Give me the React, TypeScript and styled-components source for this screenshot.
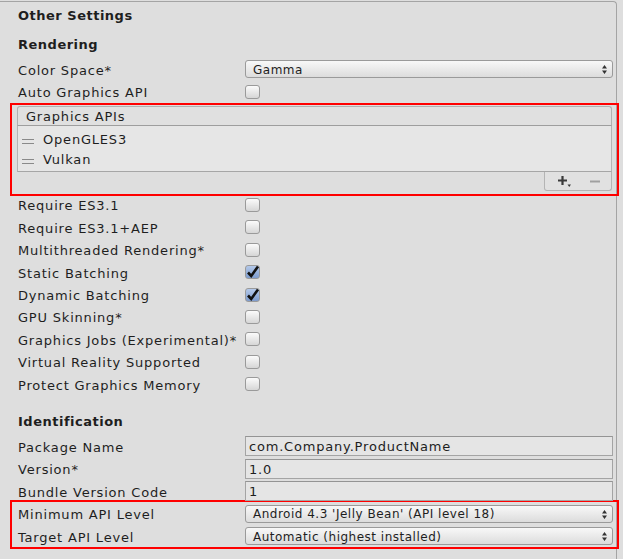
import React from "react"
import styled, { createGlobalStyle } from "styled-components"

const GlobalStyle = createGlobalStyle`
  html, body {
    margin: 0;
    background: #dedede;
  }
  body {
    font-family: "DejaVu Sans", "Liberation Sans", sans-serif;
    font-size: 13px;
    letter-spacing: 0.8px;
    color: #1e1e1e;
  }
`

const Panel = styled.div`
  box-sizing: border-box;
  width: 617px;
  min-height: 558px;
  margin-top: 1px;
  border-top: 1px solid #a4a4a4;
  border-right: 1px solid #a4a4a4;
  border-top-right-radius: 4px;
`

const Title = styled.div`
  box-sizing: border-box;
  height: 26px;
  line-height: 26px;
  padding: 1px 0 0 18px;
  font-weight: bold;
  letter-spacing: 0.5px;
`

const SectionHeading = styled.div<{ $top: number }>`
  box-sizing: border-box;
  margin-top: ${(p) => p.$top}px;
  height: 22px;
  line-height: 22px;
  padding: 1px 0 0 18px;
  font-weight: bold;
  letter-spacing: 0.5px;
`

const Rows = styled.div<{ $top?: number }>`
  padding-top: ${(p) => p.$top ?? 0}px;
`

const Row = styled.div`
  display: grid;
  grid-template-columns: 227px 1fr;
  align-items: center;
  height: 22.4px;
  padding: 0 3px 0 18px;
`

const Label = styled.span`
  padding-top: 2px;
  white-space: nowrap;
`

const Highlight = styled.div<{ $pad?: string }>`
  box-sizing: border-box;
  border: 2px solid #ff0000;
  margin: 0 -3px 0 10px;
  padding: ${(p) => p.$pad ?? "0"};

  & > ${Row} {
    padding: 0 4px 0 6px;
  }
`

const GraphicsBox = styled(Highlight)`
  margin-bottom: -2px;
`

const TargetBox = styled(Highlight)`
  margin-top: -2px;
`

const ListHeader = styled.div`
  box-sizing: border-box;
  height: 20px;
  line-height: 19px;
  padding-left: 8px;
  border: 1px solid #b0b0b0;
  border-bottom-color: #9e9e9e;
  border-radius: 3px 3px 0 0;
  background: #e0e0e0;
`

const ListBody = styled.div`
  box-sizing: border-box;
  height: 46px;
  padding-top: 4px;
  border: 1px solid #b4b4b4;
  border-top: none;
  border-bottom-color: #a6a6a6;
  background: #e6e6e6;
`

const ListItem = styled.div`
  display: flex;
  align-items: center;
  height: 20px;
  padding-left: 4px;
`

const Handle = styled.svg`
  margin-right: 9px;
  margin-top: 3px;
  flex: none;
`

const FooterRow = styled.div`
  display: flex;
  justify-content: flex-end;
`

const FooterButtons = styled.div`
  box-sizing: border-box;
  width: 68px;
  height: 19px;
  display: flex;
  align-items: center;
  gap: 19px;
  padding: 2px 0 0 13px;
  border: 1px solid #b4b4b4;
  border-top: none;
  border-radius: 0 0 3px 3px;
  background: #e1e1e1;
`

const Checkbox = styled.span<{ $checked?: boolean }>`
  box-sizing: border-box;
  position: relative;
  display: block;
  width: 15px;
  height: 14px;
  border: 1px solid #9a9a9a;
  border-radius: 3px;
  background: ${(p) =>
    p.$checked
      ? "linear-gradient(#b4c9ea, #7e9ccd)"
      : "linear-gradient(#fbfbfb, #d6d6d6)"};
`

const CheckMark = styled.svg`
  position: absolute;
  left: 0;
  top: -2px;
`

const Dropdown = styled.div`
  box-sizing: border-box;
  display: flex;
  align-items: center;
  justify-content: space-between;
  height: 18px;
  padding: 1px 5px 0 7px;
  border: 1px solid #9a9a9a;
  border-radius: 3px;
  background: linear-gradient(#f8f8f8, #dcdcdc);
  font-size: 12px;
  letter-spacing: 0.5px;
  white-space: nowrap;
`

const TextField = styled.div`
  box-sizing: border-box;
  height: 20px;
  line-height: 20px;
  padding-left: 3px;
  border: 1px solid #a4a4a4;
  border-top-color: #949494;
  background: #e5e5e5;
  white-space: nowrap;
`

const Arrows = () => (
  <svg width="5" height="9" viewBox="0 0 5 9">
    <path d="M2.5 0 L5 3.5 H0 Z M0 5.5 H5 L2.5 9 Z" fill="#333" />
  </svg>
)

const Check = () => (
  <CheckMark width="14" height="15" viewBox="0 0 14 15">
    <path
      d="M2 8.5 L5.2 12 L12 2.5"
      fill="none"
      stroke="#111"
      strokeWidth="2.6"
      strokeLinejoin="miter"
    />
  </CheckMark>
)

const DragHandle = () => (
  <Handle width="12" height="5" viewBox="0 0 12 5">
    <path d="M0 0.5 H12 M0 4.5 H12" stroke="#8a8a8a" strokeWidth="1" />
  </Handle>
)

const PlusIcon = () => (
  <svg width="13" height="11" viewBox="0 0 13 11">
    <path d="M4.5 0 V9 M0 4.5 H9" stroke="#3a3a3a" strokeWidth="2.2" />
    <path d="M9.5 8.5 H13 L11.25 11 Z" fill="#3a3a3a" />
  </svg>
)

const MinusIcon = () => (
  <svg width="10" height="3" viewBox="0 0 10 3">
    <path d="M0 1.5 H10" stroke="#a0a0a0" strokeWidth="2" />
  </svg>
)

const checkboxRows: [string, boolean][] = [
  ["Require ES3.1", false],
  ["Require ES3.1+AEP", false],
  ["Multithreaded Rendering*", false],
  ["Static Batching", true],
  ["Dynamic Batching", true],
  ["GPU Skinning*", false],
  ["Graphics Jobs (Experimental)*", false],
  ["Virtual Reality Supported", false],
  ["Protect Graphics Memory", false],
]

const textRows: [string, string][] = [
  ["Package Name", "com.Company.ProductName"],
  ["Version*", "1.0"],
  ["Bundle Version Code", "1"],
]

export default function App() {
  return (
    <>
      <GlobalStyle />
      <Panel>
        <Title>Other Settings</Title>
        <SectionHeading $top={5}>Rendering</SectionHeading>
        <Rows $top={3}>
          <Row>
            <Label>Color Space*</Label>
            <Dropdown>
              <span>Gamma</span>
              <Arrows />
            </Dropdown>
          </Row>
          <Row>
            <Label>Auto Graphics API</Label>
            <Checkbox />
          </Row>
        </Rows>
        <GraphicsBox $pad="1px 5px 3px 5px">
          <ListHeader>Graphics APIs</ListHeader>
          <ListBody>
            {["OpenGLES3", "Vulkan"].map((api) => (
              <ListItem key={api}>
                <DragHandle />
                {api}
              </ListItem>
            ))}
          </ListBody>
          <FooterRow>
            <FooterButtons>
              <PlusIcon />
              <MinusIcon />
            </FooterButtons>
          </FooterRow>
        </GraphicsBox>
        <Rows>
          {checkboxRows.map(([label, checked]) => (
            <Row key={label}>
              <Label>{label}</Label>
              <Checkbox $checked={checked}>{checked && <Check />}</Checkbox>
            </Row>
          ))}
        </Rows>
        <SectionHeading $top={15}>Identification</SectionHeading>
        <Rows $top={3}>
          {textRows.map(([label, value]) => (
            <Row key={label}>
              <Label>{label}</Label>
              <TextField>{value}</TextField>
            </Row>
          ))}
        </Rows>
        <TargetBox>
          <Row>
            <Label>Minimum API Level</Label>
            <Dropdown>
              <span>Android 4.3 'Jelly Bean' (API level 18)</span>
              <Arrows />
            </Dropdown>
          </Row>
          <Row>
            <Label>Target API Level</Label>
            <Dropdown>
              <span>Automatic (highest installed)</span>
              <Arrows />
            </Dropdown>
          </Row>
        </TargetBox>
      </Panel>
    </>
  )
}
